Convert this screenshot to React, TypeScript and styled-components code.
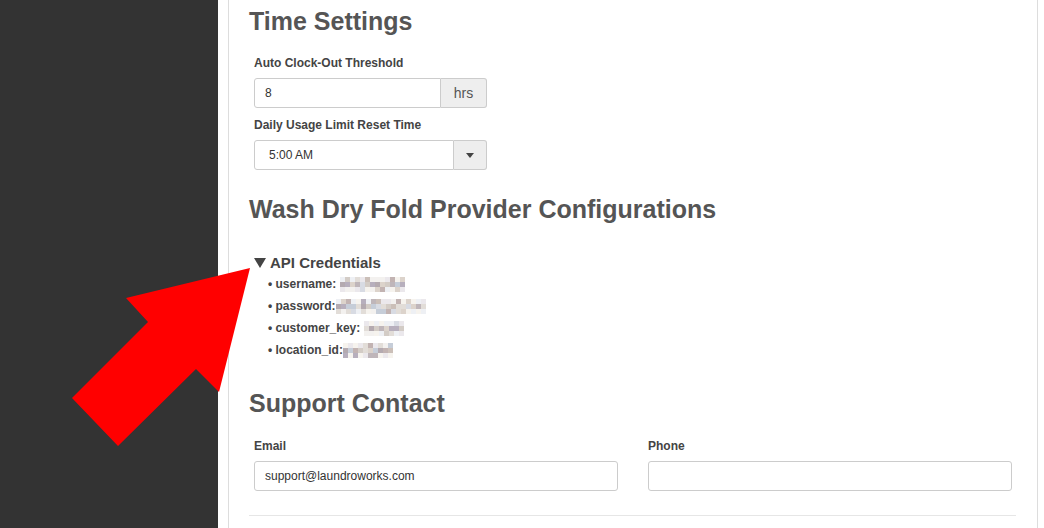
import React from "react";
import styled, { createGlobalStyle } from "styled-components";

const Global = createGlobalStyle`
  html, body { margin: 0; padding: 0; background: #fff; }
  body { font-family: "Liberation Sans", Arial, sans-serif; overflow: hidden; }
  * { box-sizing: border-box; }
`;

const Page = styled.div`
  position: relative;
  display: flex;
  width: 1044px;
  height: 528px;
  overflow: hidden;
`;

const Sidebar = styled.aside`
  width: 218px;
  flex: none;
  background: #333333;
`;

const Main = styled.main`
  flex: 1;
  padding: 0 6px 0 10px;
`;

const Card = styled.section`
  height: 100%;
  border-left: 1px solid #dddddd;
  border-right: 1px solid #dddddd;
  padding: 8px 21px 0 20px;
  display: flex;
  flex-direction: column;
`;

const Heading = styled.h2<{ $gap: number }>`
  margin: ${(p) => p.$gap}px 0 0;
  font-size: 25px;
  line-height: 26px;
  font-weight: 700;
  color: #555555;
`;

const Field = styled.div<{ $gap: number }>`
  margin: ${(p) => p.$gap}px 0 0 5px;
  display: flex;
  flex-direction: column;
`;

const Label = styled.label`
  font-size: 12px;
  line-height: 17px;
  font-weight: 700;
  color: #444444;
  margin-bottom: 6px;
`;

const Group = styled.div`
  display: flex;
  width: 233px;
  height: 30px;
`;

const TextInput = styled.div<{ $joined?: boolean }>`
  flex: 1;
  height: 30px;
  border: 1px solid #cccccc;
  border-radius: ${(p) => (p.$joined ? "3px 0 0 3px" : "3px")};
  padding: 0 10px;
  font-size: 12px;
  line-height: 28px;
  color: #333333;
  background: #fff;
`;

const SelectText = styled(TextInput)`
  padding-left: 14px;
`;

const Addon = styled.div<{ $w: number }>`
  width: ${(p) => p.$w}px;
  flex: none;
  border: 1px solid #cccccc;
  border-left: none;
  border-radius: 0 3px 3px 0;
  background: #eeeeee;
  display: flex;
  align-items: center;
  justify-content: center;
  font-size: 14px;
  color: #555555;
`;

const Caret = styled.span`
  width: 0;
  height: 0;
  border-left: 4px solid transparent;
  border-right: 4px solid transparent;
  border-top: 5px solid #444444;
`;

const Details = styled.div`
  margin: 31px 0 0 5px;
`;

const Summary = styled.div`
  display: flex;
  align-items: center;
  gap: 4px;
  font-size: 15px;
  line-height: 20px;
  font-weight: 700;
  color: #444444;
`;

const Tri = styled.span`
  width: 0;
  height: 0;
  border-left: 6px solid transparent;
  border-right: 6px solid transparent;
  border-top: 10px solid #444444;
`;

const List = styled.ul`
  list-style: none;
  margin: 0;
  padding: 0 0 0 14px;
`;

const Item = styled.li`
  display: flex;
  align-items: center;
  height: 22px;
  font-size: 12px;
  font-weight: 700;
  color: #444444;
  white-space: pre;
`;

const BlurBox = styled.span<{ $cols: number }>`
  display: grid;
  grid-template-columns: repeat(${(p) => p.$cols}, 5px);
  grid-auto-rows: 5px;
  margin-top: 1px;
`;

const Cell = styled.span<{ $c: string }>`
  background: ${(p) => p.$c};
`;

const light = ["#f3f1ef", "#ebe8ec", "#eef0f4", "#f6f3ee"];
const mid = [
  "#c2b3b2", "#b7afbd", "#d3ccc6", "#c6cdd8", "#dcd3cb", "#bfb6ba",
  "#d8dbe3", "#cbbfb8", "#e2ddd8", "#b4aab0",
];

function Blur({ cols, seed }: { cols: number; seed: number }) {
  const cells: string[] = [];
  let s = seed;
  const rnd = () => {
    s = (s * 9301 + 49297) % 233280;
    return s / 233280;
  };
  for (let i = 0; i < cols * 3; i++) {
    const row = Math.floor(i / cols);
    const r = rnd();
    if (row === 1) cells.push(mid[Math.floor(r * mid.length)]);
    else if (r < 0.35) cells.push(mid[Math.floor(rnd() * mid.length)]);
    else cells.push(light[Math.floor(rnd() * light.length)]);
  }
  return (
    <BlurBox $cols={cols}>
      {cells.map((c, i) => (
        <Cell key={i} $c={c} />
      ))}
    </BlurBox>
  );
}

const Row = styled.div`
  margin: 22px 0 0 5px;
  display: grid;
  grid-template-columns: 364px 364px;
  column-gap: 30px;
`;

const Col = styled.div`
  display: flex;
  flex-direction: column;
`;

const Rule = styled.hr`
  margin: 24px 0 0;
  border: none;
  border-top: 1px solid #e6e6e6;
`;

const Overlay = styled.svg`
  position: absolute;
  left: 0;
  top: 0;
  pointer-events: none;
`;

const creds = [
  { k: "username:", sep: " ", cols: 13, seed: 7 },
  { k: "password:", sep: "", cols: 18, seed: 31 },
  { k: "customer_key:", sep: " ", cols: 8, seed: 57 },
  { k: "location_id:", sep: "", cols: 10, seed: 91 },
];

export default function App() {
  return (
    <Page>
      <Global />
      <Sidebar />
      <Main>
        <Card>
          <Heading $gap={0}>Time Settings</Heading>
          <Field $gap={21}>
            <Label>Auto Clock-Out Threshold</Label>
            <Group>
              <TextInput $joined>8</TextInput>
              <Addon $w={46}>hrs</Addon>
            </Group>
          </Field>
          <Field $gap={9}>
            <Label>Daily Usage Limit Reset Time</Label>
            <Group>
              <SelectText $joined>5:00 AM</SelectText>
              <Addon $w={33}>
                <Caret />
              </Addon>
            </Group>
          </Field>
          <Heading $gap={26}>Wash Dry Fold Provider Configurations</Heading>
          <Details>
            <Summary>
              <Tri />
              API Credentials
            </Summary>
            <List>
              {creds.map((c) => (
                <Item key={c.k}>
                  {"• " + c.k + c.sep}
                  <Blur cols={c.cols} seed={c.seed} />
                </Item>
              ))}
            </List>
          </Details>
          <Heading $gap={29}>Support Contact</Heading>
          <Row>
            <Col>
              <Label>Email</Label>
              <TextInput>support@laundroworks.com</TextInput>
            </Col>
            <Col>
              <Label>Phone</Label>
              <TextInput />
            </Col>
          </Row>
          <Rule />
        </Card>
      </Main>
      <Overlay width="1044" height="528" viewBox="0 0 1044 528">
        <polygon
          points="250,268 126,298 148,322 72,398 118,446 196,369 219,392"
          fill="#ff0000"
        />
      </Overlay>
    </Page>
  );
}
